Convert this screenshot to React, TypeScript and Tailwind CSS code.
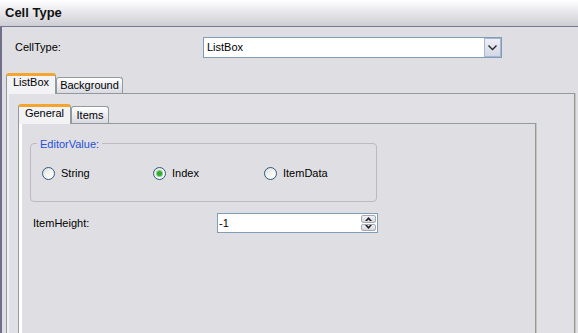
import React from "react";

function Radio({ checked, label }: { checked?: boolean; label: string }) {
  return (
    <div className="flex w-[111px] items-center gap-[6px]">
      <span className="flex h-[13px] w-[13px] shrink-0 items-center justify-center rounded-full border border-[#2c5a82] bg-gradient-to-br from-[#dcdcd8] via-[#f4f4f2] to-white">
        {checked && (
          <span className="h-[5px] w-[5px] rounded-full bg-[#3aa43a] shadow-[0_0_0_1px_#7fd27f]" />
        )}
      </span>
      <span>{label}</span>
    </div>
  );
}

function Chevron({ up }: { up?: boolean }) {
  return (
    <svg width="7" height="4" viewBox="0 0 7 4" className={up ? "rotate-180" : ""}>
      <path d="M0 0h2l1.5 1.5L5 0h2L3.5 4z" fill="#1e1e1e" />
    </svg>
  );
}

export default function App() {
  return (
    <div className="flex h-[333px] w-[578px] flex-col overflow-hidden bg-[#dfdfe3] font-['Liberation_Sans',Arial,sans-serif] text-[11px] text-black">
      <div className="flex h-[27px] shrink-0 items-center border-b border-[#77778f] bg-gradient-to-b from-white to-[#cdcdd4] pl-[5px] text-[13px] font-bold text-[#111]">
        Cell Type
      </div>

      <div className="flex flex-1 flex-col border-l-2 border-[#6f6f8c]">
        <div className="mt-[10px] flex h-[21px] items-center">
          <span className="ml-[13px] w-[188px]">CellType:</span>
          <div className="flex h-[21px] w-[299px] border border-[#7f9db9] bg-white">
            <span className="flex flex-1 items-center pl-[3px]">ListBox</span>
            <span className="flex w-[17px] items-center justify-center border border-[#a9b6d0] bg-gradient-to-b from-[#eef0f6] to-[#d3d7e4]">
              <svg width="9" height="6" viewBox="0 0 9 6">
                <path d="M0 1l1-1 3.5 3.5L8 0l1 1-4.5 4.5z" fill="#2b2b2b" />
              </svg>
            </span>
          </div>
        </div>

        <div className="ml-[4px] mt-[15px] flex flex-1 flex-col">
          <div className="flex h-[20px] items-end">
            <div className="relative z-10 -mb-px flex h-[21px] w-[50px] items-start justify-center rounded-t-[3px] border-x border-t-[3px] border-[#919b9c] border-t-[#f3a52f] bg-[#f3f3f6] leading-[13px]">
              ListBox
            </div>
            <div className="flex h-[16px] w-[67px] items-center justify-center rounded-t-[3px] border border-b-0 border-[#919b9c] bg-gradient-to-b from-white to-[#d9d9e2]">
              Background
            </div>
          </div>

          <div className="flex w-[569px] flex-1 flex-col border border-b-0 border-[#919b9c] bg-[#e1e1e5] pl-[11px] pt-[10px] shadow-[inset_2px_0_0_#f2f2f4,1px_0_0_#c6c6b8]">
            <div className="flex h-[19px] items-end">
              <div className="relative z-10 -mb-px flex h-[20px] w-[53px] items-start justify-center rounded-t-[3px] border-x border-t-[3px] border-[#919b9c] border-t-[#f3a52f] bg-[#f3f3f6] leading-[13px]">
                General
              </div>
              <div className="flex h-[17px] w-[38px] items-center justify-center rounded-t-[3px] border border-b-0 border-[#919b9c] bg-gradient-to-b from-white to-[#d9d9e2]">
                Items
              </div>
            </div>

            <div className="flex w-[518px] flex-1 flex-col border border-b-0 border-[#919b9c] bg-[#dfdfe3] shadow-[inset_3px_0_0_white,1px_0_0_#c6c6b8]">
              <div className="relative ml-[11px] mt-[19px] h-[59px] w-[347px] rounded-[4px] border border-[#bcb9c0]">
                <span className="absolute -top-[8px] left-[6px] bg-[#dfdfe3] px-[3px] text-[#1f4fd6]">
                  EditorValue:
                </span>
                <div className="flex pl-[11px] pt-[21px]">
                  <Radio label="String" />
                  <Radio label="Index" checked />
                  <Radio label="ItemData" />
                </div>
              </div>

              <div className="mt-[11px] flex items-center">
                <span className="ml-[14px] w-[184px]">ItemHeight:</span>
                <div className="flex h-[20px] w-[161px] border border-[#7f9db9] bg-white">
                  <span className="flex flex-1 items-center pl-[1px]">-1</span>
                  <div className="flex w-[16px] flex-col gap-px py-px pr-px">
                    <span className="flex flex-1 items-center justify-center rounded-[2px] border border-[#a5a9b8] bg-gradient-to-b from-[#f2f2f4] to-[#d6d6de]">
                      <Chevron up />
                    </span>
                    <span className="flex flex-1 items-center justify-center rounded-[2px] border border-[#a5a9b8] bg-gradient-to-b from-[#f2f2f4] to-[#d6d6de]">
                      <Chevron />
                    </span>
                  </div>
                </div>
              </div>
            </div>
          </div>
        </div>
      </div>
    </div>
  );
}
